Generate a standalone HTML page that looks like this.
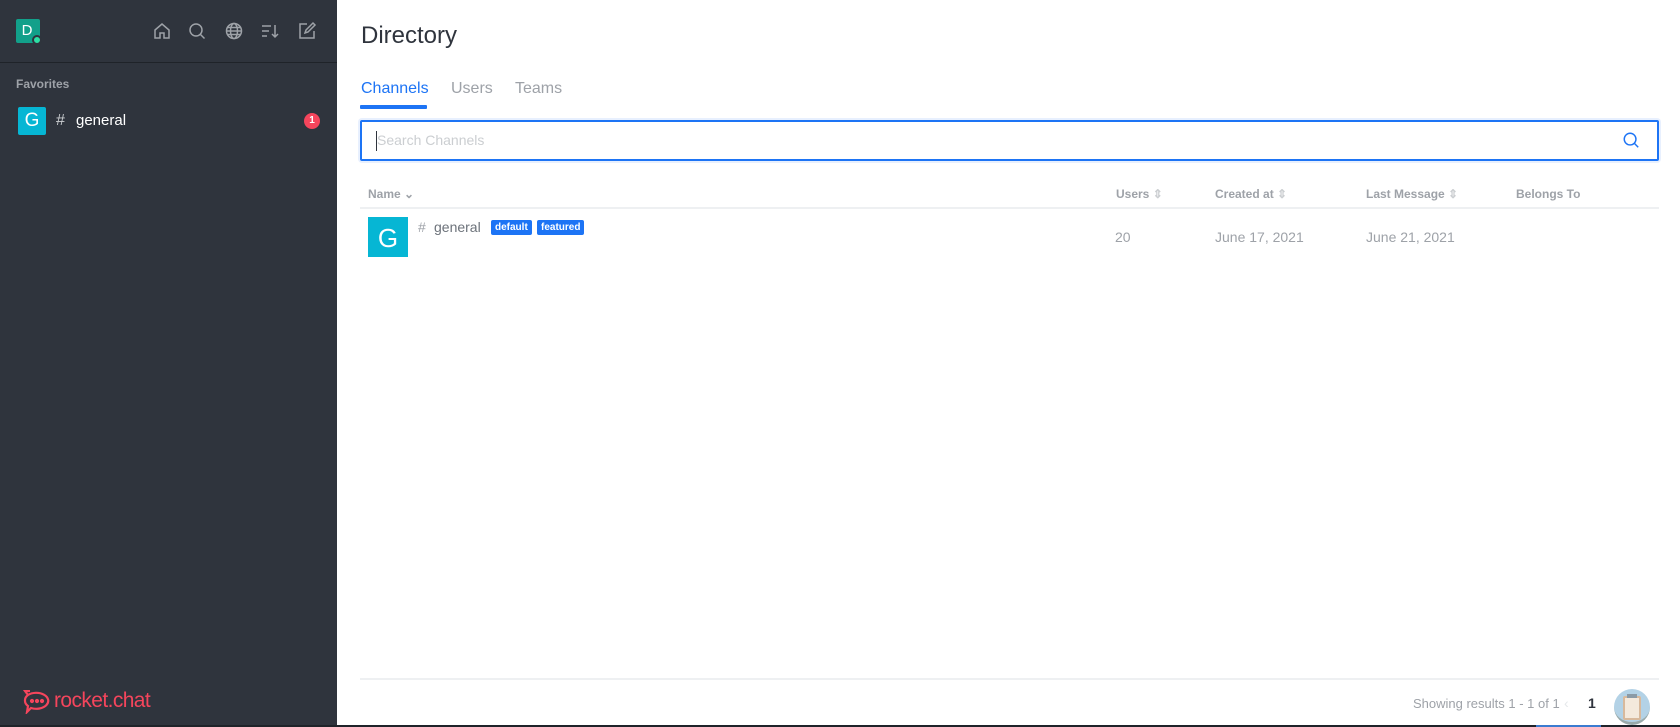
<!DOCTYPE html>
<html><head><meta charset="utf-8"><style>
*{box-sizing:border-box;margin:0;padding:0}
body{width:1680px;height:727px;overflow:hidden;font-family:"Liberation Sans",sans-serif;background:#fff;position:relative}
.sb{position:absolute;left:0;top:0;width:337px;height:727px;background:#2f343d}
.abs{position:absolute}
.ic{position:absolute;top:21px;width:20px;height:20px}
.th{position:absolute;top:187px;font-size:12px;font-weight:bold;color:#9ea2a8}
.td{position:absolute;top:229px;font-size:14px;color:#9ea2a8}
.tag{position:absolute;top:220px;height:15px;background:#1d74f5;color:#fff;font-size:10px;font-weight:bold;line-height:15px;padding:0 4px;border-radius:2px}
</style></head><body>
<div class="sb">
  <div class="abs" style="left:16px;top:19px;width:24px;height:24px;background:#12a08a;border-radius:2px;color:#fff;font-size:15px;line-height:24px;text-align:center;padding-right:2px">D</div>
  <div class="abs" style="left:32px;top:35px;width:10px;height:10px;background:#2de0a5;border-radius:50%;border:2px solid #2f343d"></div>
  <svg class="ic" style="left:152px" viewBox="0 0 20 20" fill="none" stroke="#9ea2a8" stroke-width="1.5"><path d="M3 9l7-6 7 6v8h-5v-5H8v5H3z"/></svg>
  <svg class="ic" style="left:187px" viewBox="0 0 20 20" fill="none" stroke="#9ea2a8" stroke-width="1.5"><circle cx="9" cy="9" r="6"/><path d="M13.5 13.5l4 4"/></svg>
  <svg class="ic" style="left:224px" viewBox="0 0 20 20" fill="none" stroke="#9ea2a8" stroke-width="1.5"><circle cx="10" cy="10" r="7.5"/><ellipse cx="10" cy="10" rx="3.5" ry="7.5"/><path d="M2.5 10h15M3.5 6.5h13M3.5 13.5h13"/></svg>
  <svg class="ic" style="left:260px" viewBox="0 0 20 20" fill="none" stroke="#9ea2a8" stroke-width="1.5"><path d="M2 5h9M2 10h7M2 15h5M15 4v12M12 13l3 3 3-3"/></svg>
  <svg class="ic" style="left:297px" viewBox="0 0 20 20" fill="none" stroke="#9ea2a8" stroke-width="1.5"><path d="M10 3H3v14h14v-7"/><path d="M8 12l1-3 7-7 2 2-7 7z"/></svg>
  <div class="abs" style="left:0;top:62px;width:337px;height:1px;background:#1f2329"></div>
  <div class="abs" style="left:16px;top:77px;font-size:12px;font-weight:bold;color:#9ea2a8">Favorites</div>
  <div class="abs" style="left:18px;top:107px;width:28px;height:28px;background:#06b6d4;border-radius:2px;color:#fff;font-size:19px;line-height:28px;text-align:center">G</div>
  <div class="abs" style="left:56px;top:112px;font-size:16px;color:#cbced1">#</div>
  <div class="abs" style="left:76px;top:112px;font-size:15px;color:#fff">general</div>
  <div class="abs" style="left:304px;top:113px;width:16px;height:16px;background:#f5455c;border-radius:50%;color:#fff;font-size:10px;font-weight:bold;line-height:16px;text-align:center">1</div>
  <svg class="abs" style="left:23px;top:690px" width="28" height="24" viewBox="0 0 28 24" fill="none" stroke="#f5455c" stroke-width="2.2"><path d="M5 5a12 8 0 1 1 3 13l-4 4 1-6A8 7 0 0 1 5 5z"/><path d="M5 5L2 1h5" /><circle cx="9" cy="11" r="1" fill="#f5455c"/><circle cx="14" cy="11" r="1" fill="#f5455c"/><circle cx="19" cy="11" r="1" fill="#f5455c"/></svg>
  <div class="abs" style="left:54px;top:689px;font-size:21px;color:#f5455c;letter-spacing:-0.6px">rocket.chat</div>
</div>
<div class="abs" style="left:361px;top:22px;font-size:24px;color:#2f343d">Directory</div>
<div class="abs" style="left:361px;top:80px;font-size:16px;color:#1d74f5">Channels</div>
<div class="abs" style="left:451px;top:80px;font-size:16px;color:#9ea2a8">Users</div>
<div class="abs" style="left:515px;top:80px;font-size:16px;color:#9ea2a8">Teams</div>
<div class="abs" style="left:360px;top:105px;width:67px;height:4px;background:#1d74f5;border-radius:1px"></div>
<div class="abs" style="left:358px;top:118px;width:1303px;height:45px;background:#e8f0fe;border-radius:4px"></div>
<div class="abs" style="left:360px;top:120px;width:1299px;height:41px;background:#fff;border:2px solid #1d74f5;border-radius:2px"></div>
<div class="abs" style="left:376px;top:131px;width:1px;height:20px;background:#2f343d"></div>
<div class="abs" style="left:377px;top:132px;font-size:14px;color:#cbced1">Search Channels</div>
<svg class="abs" style="left:1622px;top:131px" width="18" height="18" viewBox="0 0 20 20" fill="none" stroke="#1d74f5" stroke-width="1.6"><circle cx="9" cy="9" r="6.5"/><path d="M13.5 13.5l4.5 4.5"/></svg>
<div class="th" style="left:368px">Name ⌄</div>
<div class="th" style="left:1116px">Users <span style="color:#cbced1">⇕</span></div>
<div class="th" style="left:1215px">Created at <span style="color:#cbced1">⇕</span></div>
<div class="th" style="left:1366px">Last Message <span style="color:#cbced1">⇕</span></div>
<div class="th" style="left:1516px">Belongs To</div>
<div class="abs" style="left:360px;top:207px;width:1299px;height:2px;background:#eef0f2"></div>
<div class="abs" style="left:368px;top:217px;width:40px;height:40px;background:#06b6d4;color:#fff;font-size:26px;line-height:42px;text-align:center">G</div>
<div class="abs" style="left:418px;top:219px;font-size:14px;color:#9ea2a8">#</div>
<div class="abs" style="left:434px;top:219px;font-size:14px;color:#6c727a">general</div>
<div class="tag" style="left:491px">default</div>
<div class="tag" style="left:537px">featured</div>
<div class="td" style="left:1115px">20</div>
<div class="td" style="left:1215px">June 17, 2021</div>
<div class="td" style="left:1366px">June 21, 2021</div>
<div class="abs" style="left:360px;top:678px;width:1299px;height:2px;background:#eef0f2"></div>
<div class="abs" style="left:1413px;top:696px;font-size:13px;color:#9ea2a8">Showing results 1 - 1 of 1</div>
<div class="abs" style="left:1564px;top:695px;font-size:14px;color:#e4e7ea">‹</div>
<div class="abs" style="left:1588px;top:695px;font-size:14px;font-weight:bold;color:#2f343d">1</div>
<div class="abs" style="left:1614px;top:689px;width:36px;height:36px;background:#b3d2e6;border-radius:50%;border-bottom:3px solid #9aa"></div>
<div class="abs" style="left:1623px;top:696px;width:18px;height:24px;background:#f4e9dc;border:2px solid #d8b99c;border-radius:2px"></div>
<div class="abs" style="left:1627px;top:694px;width:10px;height:4px;background:#8a9aa6"></div>
<div class="abs" style="left:0;top:725px;width:1680px;height:2px;background:#1f2329"></div>
<div class="abs" style="left:1536px;top:725px;width:65px;height:2px;background:#3b7bd0"></div>
</body></html>
